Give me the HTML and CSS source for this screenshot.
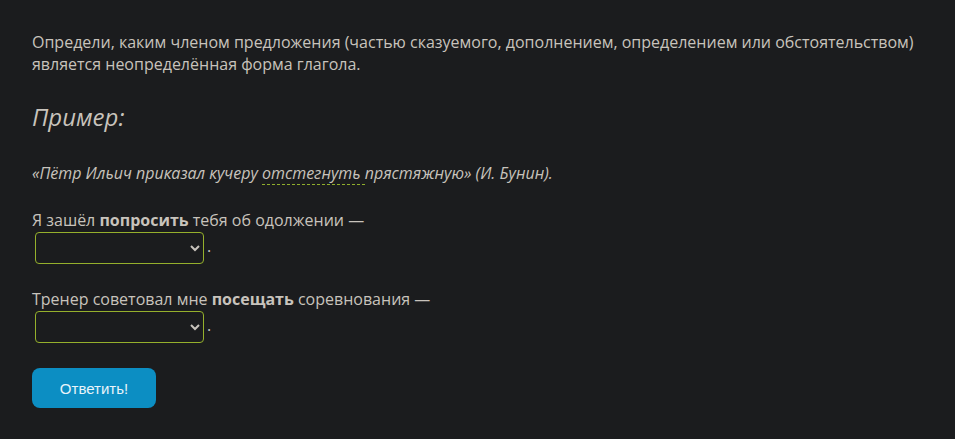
FILE: index.html
```html
<!DOCTYPE html>
<html lang="ru">
<head>
  <meta charset="UTF-8">
  <title>Неопределённая форма глагола</title>
  <link rel="stylesheet" href="styles.css">
</head>
<body>
  <main class="task">
    <p class="task-text">Определи, каким членом предложения (частью сказуемого, дополнением, определением или обстоятельством) является неопределённая форма глагола.</p>

    <h2 class="example-title">Пример:</h2>
    <p class="example-quote">«Пётр Ильич приказал кучеру <span class="mark">отстегнуть </span>прястяжную» (И. Бунин).</p>

    <div class="question">
      Я зашёл <b>попросить</b> тебя об одолжении —<br>
      <select class="answer"><option></option><option>часть сказуемого</option><option>дополнение</option><option>определение</option><option>обстоятельство</option></select>.
    </div>

    <div class="question">
      Тренер советовал мне <b>посещать</b> соревнования —<br>
      <select class="answer"><option></option><option>часть сказуемого</option><option>дополнение</option><option>определение</option><option>обстоятельство</option></select>.
    </div>

    <button class="submit" type="button">Ответить!</button>
  </main>
</body>
</html>
```

FILE: styles.css
```css
/* Base */
*, *::before, *::after { box-sizing: border-box; }
html, body { margin: 0; padding: 0; }
body { background: #1b1c1e; color: #c8c3bc; font-family: "Open Sans", "Noto Sans", sans-serif; font-size: 16px; line-height: 22px; }

.task { padding: 31px 32px 20px; }
.task-text { margin: 0 0 26px; max-width: 900px; }

/* Example */
.example-title { margin: 0 0 29px; font-size: 24px; line-height: 32px; font-weight: 400; font-style: italic; }
.example-quote { margin: 0 0 25px; font-size: 16px; font-style: italic; }
.mark { border-bottom: 1px dashed #8fae2c; }

/* Questions */
.question { margin-bottom: 24px; }
.question b { font-weight: 700; }
.answer {
  width: 169px;
  height: 32px;
  margin: 1px 3px 0 3px;
  vertical-align: middle;
  background: #1b1c1e;
  color: #c8c3bc;
  border: 1px solid #95b02c;
  border-radius: 4px;
  font-family: inherit;
  font-size: 15px;
}

/* Button */
.submit {
  display: block;
  margin-top: 25px;
  width: 124px;
  height: 40px;
  border: none;
  border-radius: 8px;
  background: #0c8ec3;
  color: #e8f4fa;
  font-family: "Liberation Sans", Arial, sans-serif;
  font-size: 15px;
  cursor: pointer;
}
```
